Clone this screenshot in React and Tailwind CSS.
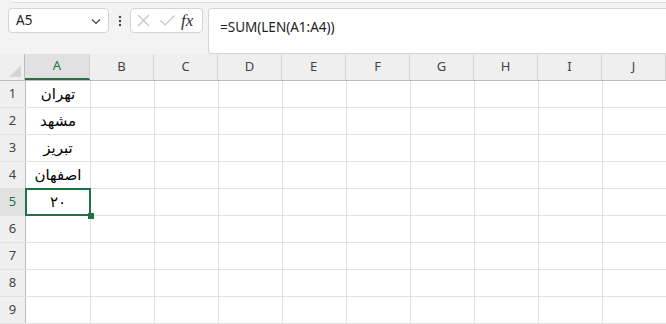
import React from "react";

const cols = ["A", "B", "C", "D", "E", "F", "G", "H", "I", "J"];
const values = ["تهران", "مشهد", "تبریز", "اصفهان", "۲۰", "", "", "", ""];

const App = () => {
  return (
    <div className="w-[666px] h-[324px] overflow-hidden bg-[#f3f3f3] font-['Noto_Sans',sans-serif] text-[#222]">
      {/* ribbon edge */}
      <div className="ml-[12px] h-[3px] bg-[#fafafa] border-b border-[#dedede]" />

      {/* formula bar row */}
      <div className="flex items-start pt-[5px] h-[51px]">
        <div className="ml-[8px] w-[101px] h-[25px] bg-white border border-[#d4d4d4] rounded-[4px] flex items-center justify-between pl-[7px] pr-[6px]">
          <span className="text-[13.5px] leading-none">A5</span>
          <svg width="12" height="12" viewBox="0 0 12 12">
            <path d="M2 4.5 L6 8.5 L10 4.5" fill="none" stroke="#444" strokeWidth="1.2" />
          </svg>
        </div>
        <div className="w-[21px] h-[25px] flex items-center justify-center">
          <svg width="4" height="12" viewBox="0 0 4 12">
            <circle cx="2" cy="2" r="1.2" fill="#444" />
            <circle cx="2" cy="6" r="1.2" fill="#444" />
            <circle cx="2" cy="10" r="1.2" fill="#444" />
          </svg>
        </div>
        <div className="w-[73px] h-[25px] bg-white border border-[#d4d4d4] rounded-[4px] flex items-center pl-[5px]">
          <svg width="15" height="15" viewBox="0 0 15 15">
            <path d="M2 2 L13 13 M13 2 L2 13" stroke="#c4c4c4" strokeWidth="1.1" />
          </svg>
          <svg width="17" height="15" viewBox="0 0 17 15" className="ml-[8px]">
            <path d="M1.5 7.5 L6 12 L15.5 2.5" fill="none" stroke="#c4c4c4" strokeWidth="1.1" />
          </svg>
          <span className="ml-[5px] font-['Liberation_Serif',serif] italic text-[17px] leading-none text-[#333]">
            fx
          </span>
        </div>
        <div className="ml-[5px] flex-1 h-[46px] bg-white border border-r-0 border-[#d4d4d4] rounded-l-[4px] pl-[11px] pt-[5px]">
          <span className="text-[13.5px]">=SUM(LEN(A1:A4))</span>
        </div>
      </div>

      {/* column headers */}
      <div className="flex h-[27px] bg-[#efefef] border-b border-[#bcbcbc] text-[13px] text-[#444]">
        <div className="w-[26px] border-r border-[#bcbcbc] relative">
          <svg width="12" height="12" viewBox="0 0 12 12" className="absolute right-[3px] bottom-[3px]">
            <path d="M12 0 L12 12 L0 12 Z" fill="#d6d6d6" />
          </svg>
        </div>
        {cols.map((c, i) => (
          <div
            key={c}
            className={
              i === 0
                ? "w-[65px] shrink-0 flex items-center justify-center border-r border-[#d4d4d4] bg-[#e1e1e1] text-[#217346] border-b-2 border-b-[#217346]"
                : "w-[64px] shrink-0 flex items-center justify-center border-r border-[#d4d4d4]"
            }
          >
            {c}
          </div>
        ))}
      </div>

      {/* rows */}
      {values.map((v, r) => (
        <div key={r} className="flex h-[27px] border-b border-[#e1e1e1]">
          <div
            className={
              r === 4
                ? "w-[26px] shrink-0 flex items-center justify-center bg-[#e1e1e1] border-r border-[#bcbcbc] text-[13px] text-[#217346]"
                : "w-[26px] shrink-0 flex items-center justify-center bg-[#efefef] border-r border-[#bcbcbc] text-[13px] text-[#444]"
            }
          >
            {r + 1}
          </div>
          <div className={r === 4 ? "w-[65px] shrink-0 relative z-10 flex items-center justify-center border-r border-[#e1e1e1] bg-white" : "w-[65px] shrink-0 relative flex items-center justify-center border-r border-[#e1e1e1] bg-white"}>
            <span dir="rtl" className="font-['DejaVu_Sans',sans-serif] text-[15px] text-black leading-none pt-[1px]">
              {v}
            </span>
            {r === 4 && (
              <>
                <div className="absolute left-[-1px] top-[-1px] right-[-1px] bottom-[-1px] border-2 border-[#217346]" />
                <div className="absolute right-[-4px] bottom-[-4px] w-[6px] h-[6px] bg-[#217346]" />
              </>
            )}
          </div>
          {cols.slice(1).map((c) => (
            <div key={c} className="w-[64px] shrink-0 border-r border-[#e1e1e1] bg-white" />
          ))}
        </div>
      ))}
    </div>
  );
};

export default App;
